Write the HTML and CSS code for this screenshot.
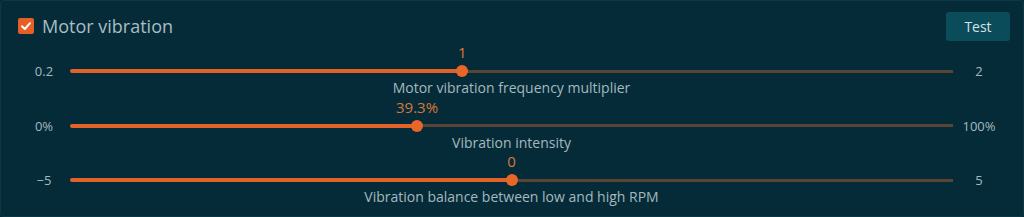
FILE: index.html
```html
<!DOCTYPE html>
<html>
<head>
<meta charset="utf-8">
<link rel="stylesheet" href="styles.css">
</head>
<body>
<div class="panel">
  <div class="header">
    <label class="toggle">
      <span class="check"><svg viewBox="0 0 16 16" width="16" height="16"><path d="M4 8.3 L6.8 11 L12 5.2" fill="none" stroke="#fff" stroke-width="2" stroke-linecap="round" stroke-linejoin="round"/></svg></span>
      <span class="title">Motor vibration</span>
    </label>
    <button class="btn">Test</button>
  </div>

  <div class="slider">
    <div class="value-row"><span class="value" style="left:44.44%">1</span></div>
    <span class="min">0.2</span>
    <div class="track"><div class="fill" style="width:44.44%"></div><div class="rest"></div><span class="thumb" style="left:44.44%"></span></div>
    <span class="max">2</span>
    <div class="desc">Motor vibration frequency multiplier</div>
  </div>

  <div class="slider">
    <div class="value-row"><span class="value" style="left:39.3%">39.3%</span></div>
    <span class="min">0%</span>
    <div class="track"><div class="fill" style="width:39.3%"></div><div class="rest"></div><span class="thumb" style="left:39.3%"></span></div>
    <span class="max">100%</span>
    <div class="desc">Vibration intensity</div>
  </div>

  <div class="slider">
    <div class="value-row"><span class="value" style="left:50%">0</span></div>
    <span class="min">−5</span>
    <div class="track"><div class="fill" style="width:50%"></div><div class="rest"></div><span class="thumb" style="left:50%"></span></div>
    <span class="max">5</span>
    <div class="desc">Vibration balance between low and high RPM</div>
  </div>
</div>
</body>
</html>
```
FILE: styles.css
```css
* { box-sizing: border-box; }
html, body { margin: 0; padding: 0; }
body {
  width: 1024px;
  height: 217px;
  background: #052a37;
  font-family: "Open Sans", "DejaVu Sans", sans-serif;
  color: #a3b9bf;
  overflow: hidden;
}
.panel {
  height: 217px;
  background: #062b38;
  border: 1px solid #0b3846;
  border-radius: 4px;
}
.header {
  display: flex;
  align-items: center;
  justify-content: space-between;
  padding: 10px 13px 0 17px;
  height: 40px;
}
.toggle {
  display: flex;
  align-items: center;
  gap: 8px;
}
.check {
  width: 16px;
  height: 16px;
  background: #e65f26;
  border-radius: 2px;
  display: flex;
}
.title {
  font-size: 18px;
  color: #a7bec4;
  line-height: 20px;
}
.btn {
  font-family: inherit;
  width: 64px;
  height: 29px;
  border: none;
  border-radius: 3px;
  background: #0b4c5a;
  color: #d3e3e7;
  font-size: 14px;
  padding: 0;
}
.slider {
  display: grid;
  grid-template-columns: 40px 1fr 40px;
  grid-template-rows: 16px 12px 16px;
  row-gap: 4px;
  column-gap: 6px;
  padding: 0 24px 0 23px;
  margin-top: 2.5px;
  font-size: 13px;
}
.header + .slider { margin-top: 4px; }
.value-row {
  grid-column: 2;
  grid-row: 1;
  position: relative;
  line-height: 16px;
}
.value {
  position: absolute;
  top: -1px;
  transform: translateX(-50%);
  color: #d8773a;
  font-size: 15px;
  line-height: 16px;
}
.min, .max {
  grid-row: 2;
  text-align: center;
  line-height: 12px;
  font-size: 13px;
}
.min { grid-column: 1; }
.max { grid-column: 3; }
.track {
  grid-column: 2;
  grid-row: 2;
  position: relative;
  display: flex;
  align-items: center;
}
.fill {
  height: 4px;
  background: #e3622a;
  border-radius: 2px 0 0 2px;
}
.rest {
  flex: 1;
  height: 3px;
  background: #5a4435;
}
.thumb {
  position: absolute;
  top: 0;
  width: 12px;
  height: 12px;
  margin-left: -6px;
  border-radius: 50%;
  background: #ea6528;
}
.desc {
  grid-column: 2;
  grid-row: 3;
  text-align: center;
  line-height: 16px;
  font-size: 14px;
  margin-top: -1px;
}
```
